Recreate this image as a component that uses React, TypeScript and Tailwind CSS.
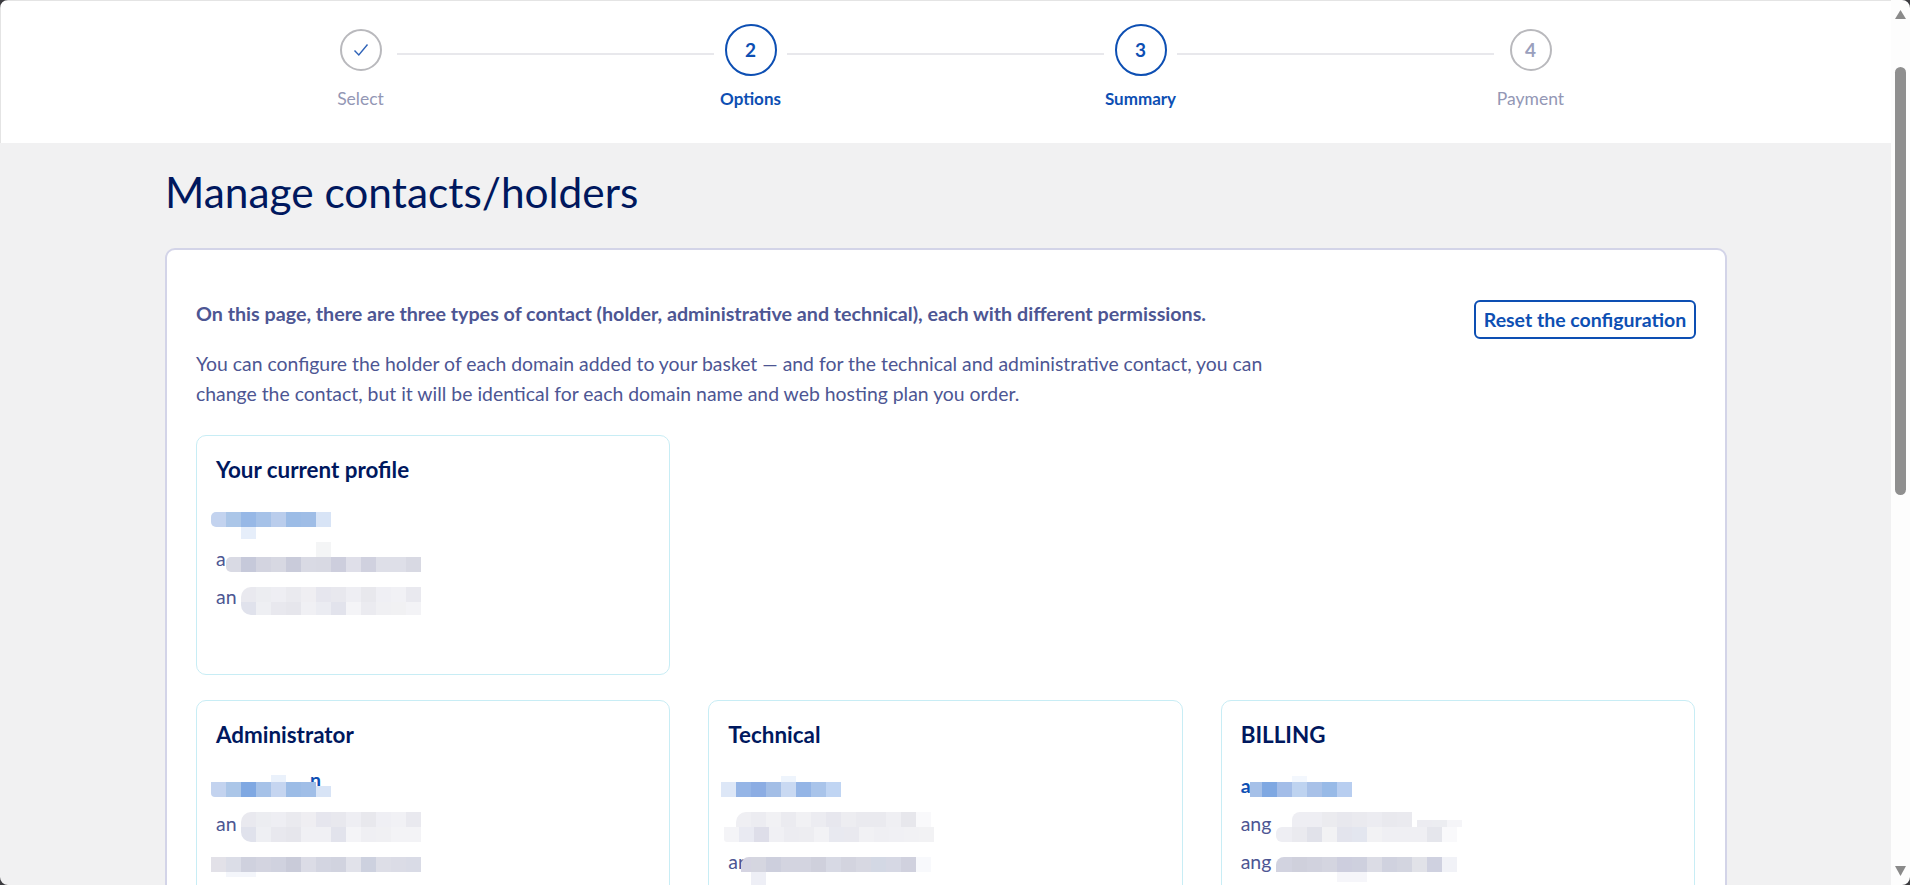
const steps = [
  { label: "Select", state: "done" },
  { label: "Options", state: "active", num: "2" },
  { label: "Summary", state: "active", num: "3" },
  { label: "Payment", state: "todo", num: "4" },
];

type Blur = { x: number; y: number; colors: string[]; h?: number; w0?: number; round?: string };

function Step({ label, state, num }: { label: string; state: string; num?: string }) {
  const active = state === "active";
  return (
    <div className="w-[73px] flex flex-col items-center shrink-0">
      <div className="h-[52px] flex items-center justify-center">
        {active ? (
          <div className="w-[52px] h-[52px] rounded-full border-2 border-[#0d4fb3] flex items-center justify-center text-[#0d4fb3] font-bold text-[19px]">
            {num}
          </div>
        ) : (
          <div className="w-[42px] h-[42px] rounded-full border-2 border-[#b9b9bd] flex items-center justify-center text-[#9a9fbd] font-bold text-[19px]">
            {state === "done" ? (
              <svg width="16" height="14" viewBox="0 0 16 14" fill="none">
                <path d="M1.5 7.5 L5.8 12 L14.5 1.5" stroke="#2f63b8" strokeWidth="1.4" />
              </svg>
            ) : (
              num
            )}
          </div>
        )}
      </div>
      <div
        className={
          "mt-[12px] leading-[22px] whitespace-nowrap " +
          (active ? "text-[17px] font-bold text-[#0d4fb3]" : "text-[17.5px] text-[#9397b5]")
        }
      >
        {label}
      </div>
    </div>
  );
}

function BlurStrip({ b }: { b: Blur }) {
  return (
    <div
      className={"absolute flex overflow-hidden " + (b.round ?? "")}
      style={{ left: b.x, top: b.y, height: b.h ?? 15 }}
    >
      {b.colors.map((c, i) => (
        <div key={i} style={{ width: i === 0 && b.w0 ? b.w0 : 15, background: c }} />
      ))}
    </div>
  );
}

function ContactCard({
  title,
  name,
  lines,
  blurs,
  compact,
}: {
  title: string;
  name?: React.ReactNode;
  lines: string[];
  blurs: Blur[];
  compact?: boolean;
}) {
  return (
    <div className="relative h-[240px] rounded-[10px] border border-[#c8edf5] bg-white pt-[18px] px-[19px]">
      <h3 className="text-[22.4px] leading-[32px] font-bold text-[#00185e]">{title}</h3>
      <div className={"h-[38px] flex items-center text-[19.5px] font-bold text-[#0d4fb3] " + (compact ? "mt-[11px] mb-[5px]" : "mt-[16px]")}>
        {name}
      </div>
      {lines.map((l, i) => (
        <div key={i} className="h-[38px] flex items-center text-[19.5px] text-[#4d5693]">
          {l}
        </div>
      ))}
      {blurs.map((b, i) => (
        <BlurStrip key={i} b={b} />
      ))}
    </div>
  );
}

const profileBlurs: Blur[] = [
  { x: 14, y: 76, round: "rounded-l-[5px]", colors: ["#c3d3ef", "#abc6e8", "#97b8e6", "#a6c2e8", "#bacdec", "#9cbce6", "#9fbde6", "#d8e4f6"] },
  { x: 44, y: 91, h: 12, colors: ["#e6eefa"] },
  { x: 119, y: 106, colors: ["#f4f5f6"] },
  { x: 29, y: 121, round: "rounded-l-[5px]", colors: ["#d9dae4", "#c6c9da", "#d3d4e0", "#d7d8e2", "#c9cbda", "#d9dae4", "#d8d9e3", "#cdcedd", "#dfdfe9", "#d0d1df", "#dedfe8", "#dedfe8", "#d8d9e3"] },
  { x: 44, y: 151, round: "rounded-tl-[10px]", colors: ["#e9e9ef", "#ecedf1", "#eeeef3", "#eaeaef", "#efeef2", "#e6e6ee", "#e8e8ee", "#eeeef3", "#e8e8ed", "#efeff4", "#f1f1f5", "#e9e9ef"] },
  { x: 44, y: 166, h: 13, round: "rounded-bl-[10px]", colors: ["#e0e2ec", "#eeeff3", "#e8e8ee", "#e6e6ec", "#f0f0f4", "#ebecf2", "#e2e3ec", "#f4f4f7", "#ebebf0", "#f0f0f3", "#f1f1f3", "#f3f3f6"] },
];

const adminBlurs: Blur[] = [
  { x: 74, y: 74, h: 7, colors: ["#eaf1fb"] },
  { x: 14, y: 81, round: "rounded-bl-[4px]", colors: ["#c3d3ef", "#abc6e8", "#7fa8e2", "#a6c2e8", "#c5d5f0", "#9cbce6", "#a0bee7"] },
  { x: 119, y: 85, h: 11, colors: ["#d8e4f6"] },
  { x: 44, y: 111, round: "rounded-tl-[10px]", colors: ["#e9e9ef", "#ecedf1", "#eeeef3", "#eaeaef", "#efeef2", "#e6e6ee", "#e8e8ee", "#eeeef3", "#e8e8ed", "#efeff4", "#f1f1f5", "#e9e9ef"] },
  { x: 44, y: 126, round: "rounded-bl-[10px]", colors: ["#e0e2ec", "#eeeff3", "#e8e8ee", "#e6e6ec", "#f0f0f4", "#f0f0f4", "#e2e3ec", "#f4f4f7", "#efeff3", "#f0f0f3", "#f3f3f6", "#f3f3f6"] },
  { x: 14, y: 156, colors: ["#e2e1e8", "#dbdde7", "#cfd1de", "#d3d4e0", "#d0d2df", "#c9cbd9", "#dbdce6", "#d3d5e1", "#d1d3df", "#e1e2ea", "#cdd1df", "#dddee7", "#dbdce6", "#d9dbe6"] },
  { x: 29, y: 171, h: 5, colors: ["#f4f6fb", "#f4f6fb"] },
];

const techBlurs: Blur[] = [
  { x: 72, y: 75, h: 6, colors: ["#eef4fc"] },
  { x: 12, y: 81, colors: ["#dde7f7", "#95b5e6", "#8cade3", "#a3bee6", "#c9d9f2", "#94b5e6", "#a9c4ea", "#c0d5f3"] },
  { x: 27, y: 111, round: "rounded-tl-[10px]", colors: ["#efeff3", "#ececf1", "#f1f1f4", "#ebebf0", "#f1f1f4", "#ececf1", "#e7e7ee", "#ededf1", "#eaeaef", "#eaeaef", "#efeff3", "#e7e7ec", "#f9f9fb"] },
  { x: 15, y: 126, round: "rounded-bl-[3px]", colors: ["#f4f4f7", "#e9eaf2", "#dedee9", "#f0f0f4", "#ececf1", "#ededf1", "#f2f2f5", "#e8e9f0", "#e9e9ef", "#f1f1f4", "#efeff3", "#f0f0f4", "#f1f1f4", "#f2f2f4"] },
  { x: 32, y: 156, w0: 10, round: "rounded-tl-[8px]", colors: ["#d5d4e2", "#d5d6e0", "#cdcfdd", "#d3d4e0", "#d3d4e0", "#cfd0dc", "#d7d9e4", "#d3d4df", "#d7d8e2", "#d3d8e4", "#d6d8e4", "#d0d1de", "#f8f9fc"] },
  { x: 42, y: 171, h: 14, colors: ["#eeeff6"] },
];

const billingBlurs: Blur[] = [
  { x: 70, y: 75, h: 6, colors: ["#f3f7fd"] },
  { x: 28, y: 81, w0: 12, colors: ["#a5c0e8", "#7fa8e2", "#a3bde8", "#bed3f0", "#a8c1e8", "#98bae7", "#b8cef0"] },
  { x: 70, y: 111, round: "rounded-tl-[8px]", colors: ["#eeeef3", "#eeeef3", "#ebebef", "#e8e8ee", "#eaeaef", "#ececf1", "#e9e9ee", "#eaeaef"] },
  { x: 195, y: 119, h: 7, colors: ["#ececf1", "#ecedf1", "#f5f5f8"] },
  { x: 54, y: 126, w0: 16, round: "rounded-l-[6px]", colors: ["#eeeef3", "#eaeaef", "#e1e2ea", "#f2f2f4", "#e3e4ed", "#e3e6ef", "#f2f2f4", "#efeff3", "#efeff3", "#efeff3", "#e5e6ec", "#f9f9fb"] },
  { x: 54, y: 156, w0: 16, round: "rounded-tl-[8px]", colors: ["#d2d3e0", "#cfd0dc", "#d1d2de", "#d4d5e0", "#cdcede", "#ced0de", "#dbdce5", "#d0d2df", "#d3d5e0", "#e1e2e8", "#cfd1e0", "#f1f2f7"] },
  { x: 115, y: 171, h: 10, colors: ["#f6f6fa", "#f6f6fa"] },
];

function Corner({ className, d }: { className: string; d: string }) {
  return (
    <svg className={"absolute w-[8px] h-[8px] " + className} viewBox="0 0 8 8">
      <path d={d} fill="#3c3c40" />
    </svg>
  );
}

export default function App() {
  return (
    <div className="relative h-[885px] overflow-hidden flex bg-[#f1f1f2] font-['Lato','Liberation_Sans',sans-serif]">
      <div className="flex-1 min-w-0">
        <div className="h-[143px] bg-white border-t border-l border-[#e4e4e4] flex justify-center pt-[23px] pr-px">
          {steps.map((s, i) => (
            <div key={s.label} className="flex items-start">
              <Step label={s.label} state={s.state} num={s.num} />
              {i < steps.length - 1 && <div className="w-[317px] h-[2px] mt-[29px] bg-[#e8e8ec]" />}
            </div>
          ))}
        </div>

        <div className="ml-[165px] w-[1562px]">
          <h1 className="mt-[22px] h-[83px] text-[42.4px] leading-[54px] text-[#00185e]">Manage contacts/holders</h1>

          <div className="h-[700px] rounded-[10px] border-2 border-[#d3d4e8] bg-white pl-[29px] pr-[30px] pt-[49px]">
            <div className="flex justify-between items-start">
              <div>
                <p className="text-[19.7px] leading-[30px] font-bold text-[#4d5693]">
                  On this page, there are three types of contact (holder, administrative and technical), each with different permissions.
                </p>
                <p className="mt-[20px] w-[1075px] text-[19.4px] leading-[30px] text-[#4d5693]">
                  You can configure the holder of each domain added to your basket — and for the technical and administrative contact, you can change the contact, but it will be identical for each domain name and web hosting plan you order.
                </p>
              </div>
              <button className="mt-[1px] -mr-px w-[222px] h-[39px] rounded-[6px] border-2 border-[#0d4fb3] text-[#0d4fb3] font-bold text-[19.5px] whitespace-nowrap">
                Reset the configuration
              </button>
            </div>

            <div className="mt-[26px] grid grid-cols-3 gap-x-[38px] gap-y-[25px]">
              <ContactCard title="Your current profile" compact lines={["a", "an"]} blurs={profileBlurs} />
              <div className="col-span-2" />
              <ContactCard
                title="Administrator"
                name={<span className="relative -top-[6px] ml-[94px]">n</span>}
                lines={["an", ""]}
                blurs={adminBlurs}
              />
              <ContactCard title="Technical" lines={["", "ar"]} blurs={techBlurs} />
              <ContactCard title="BILLING" name="a" lines={["ang", "ang"]} blurs={billingBlurs} />
            </div>
          </div>
        </div>
      </div>

      <div className="w-[19px] shrink-0 bg-[#fdfdfd] flex flex-col items-center">
        <svg className="mt-[10px] shrink-0" width="11" height="9" viewBox="0 0 11 9">
          <path d="M5.5 0 L11 9 L0 9 Z" fill="#8a8a8a" />
        </svg>
        <div className="mt-[48px] w-[11px] h-[428px] rounded-full bg-[#8f8f8f]" />
        <svg className="mt-auto mb-[9px] shrink-0" width="11" height="10" viewBox="0 0 11 10">
          <path d="M0 0 L11 0 L5.5 10 Z" fill="#8a8a8a" />
        </svg>
      </div>

      <Corner className="left-0 top-0" d="M0 0 H8 A8 8 0 0 0 0 8 Z" />
      <Corner className="right-0 top-0" d="M8 0 H0 A8 8 0 0 1 8 8 Z" />
      <Corner className="right-0 bottom-0" d="M8 8 H0 A8 8 0 0 0 8 0 Z" />
      <Corner className="left-0 bottom-0" d="M0 8 H8 A8 8 0 0 1 0 0 Z" />
    </div>
  );
}
